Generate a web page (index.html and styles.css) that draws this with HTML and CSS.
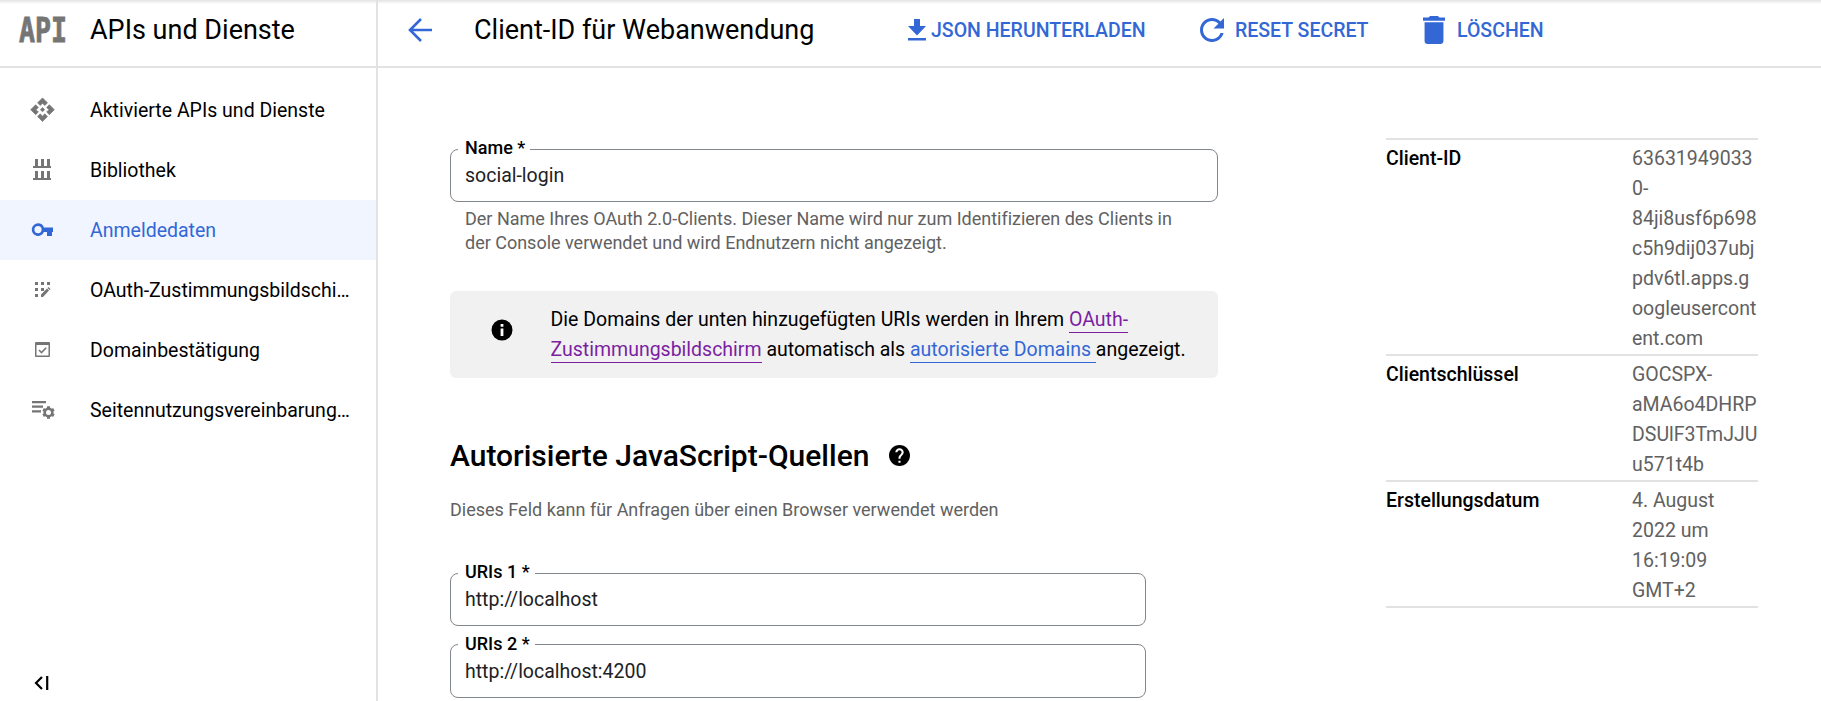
FILE: index.html
```html
<!DOCTYPE html>
<html lang="de">
<head>
<meta charset="utf-8">
<title>Client-ID für Webanwendung</title>
<link rel="stylesheet" href="styles.css">
</head>
<body>
<div class="app">
  <aside class="sidebar">
    <header class="side-head">
      <svg class="logo" width="52" height="50" viewBox="0 0 52 50"><text x="1" y="36.500" textLength="48" lengthAdjust="spacingAndGlyphs">API</text></svg>
      <span class="side-title">APIs und Dienste</span>
    </header>
    <nav class="nav">
      <a class="item"><svg width="28" height="28" viewBox="0 0 24 24"><path d="M14 12l-2 2-2-2 2-2 2 2zm-2-6l2.120 2.120 2.500-2.500L12 1 7.380 5.620l2.500 2.500L12 6zm-6 6l2.120-2.120-2.500-2.500L1 12l4.620 4.620 2.500-2.500L6 12zm12 0l-2.120 2.120 2.500 2.500L23 12l-4.620-4.620-2.500 2.500L18 12zm-6 6l-2.120-2.120-2.500 2.500L12 23l4.620-4.620-2.500-2.500L12 18z" transform="translate(1.400 .7) scale(.92)" stroke="currentColor" stroke-width=".6"/></svg><span>Aktivierte APIs und Dienste</span></a>
      <a class="item"><svg width="28" height="28" viewBox="0 0 28 28"><path d="M7 3h3v7h3V3h3v7h3V3h3v7h1v2H5v-2h2zM7 15h3v7h3v-7h3v7h3v-7h3v7h1v2H5v-2h2z"/></svg><span>Bibliothek</span></a>
      <a class="item active"><svg width="28" height="28" viewBox="0 0 28 28"><path fill-rule="evenodd" d="M10 7.300a6.300 6.300 0 1 0 5.900 8.700H19v4h5v-4h1v-4.500H15.900A6.300 6.300 0 0 0 10 7.300zM10 10a3.600 3.600 0 1 1 0 7.200A3.600 3.600 0 0 1 10 10z"/></svg><span>Anmeldedaten</span></a>
      <a class="item"><svg width="28" height="28" viewBox="0 0 28 28"><path d="M7 6h3v3H7zM13 6h3v3h-3zM19 6h3v3h-3zM7 12h3v3H7zM13 12h3v3h-3zM7 18h3v3H7zM13 18.500l6-6 2 2-6 6.500h-2zM19.500 12l1-1 2 2-1 1z"/></svg><span>OAuth-Zustimmungsbildschi…</span></a>
      <a class="item"><svg width="28" height="28" viewBox="0 0 28 28"><path fill-rule="evenodd" d="M8 6h13a1 1 0 0 1 1 1v13a1 1 0 0 1-1 1H8a1 1 0 0 1-1-1V7a1 1 0 0 1 1-1zM8.500 9v10.500h12V9z"/><path class="line" d="M11 14l2.500 2.500 4.700-4.700" stroke-width="1.600"/></svg><span>Domainbestätigung</span></a>
      <a class="item"><svg width="28" height="28" viewBox="0 0 28 28"><path d="M4 5h14v2.200H4zM4 9.600h11v2.200H4zM4 14.200h9v2.200H4z"/><circle cx="20.500" cy="16.500" r="6.500" fill="#fff"/><circle class="line" cx="20.500" cy="16.500" r="3.800" stroke-width="2.600"/><path class="line" stroke-width="3" d="M20.500 10.300v2.200M20.500 20.500v2.200M15.130 13.400l1.900 1.100M23.970 18.500l1.900 1.100M15.130 19.600l1.900-1.100M23.970 14.500l1.900-1.100"/></svg><span>Seitennutzungsvereinbarung…</span></a>
    </nav>
    <div class="collapse"><svg width="16" height="16" viewBox="0 0 16 16"><path class="line" stroke-width="2.200" d="M8 2L2 8l6 6M13.200 1v14"/></svg></div>
  </aside>
  <main class="main">
    <header class="toolbar">
      <svg class="back" width="26" height="26" viewBox="0 0 26 26"><path class="line" stroke-width="2.600" d="M14 2L3 13 14 24M3 13h22"/></svg>
      <h1 class="title">Client-ID für Webanwendung</h1>
      <a class="action download"><svg width="18" height="22" viewBox="0 0 18 22"><path d="M6 0h6v7h6l-9 9.500L0 7h6zM0 19h18v2.500H0z"/></svg><span>JSON HERUNTERLADEN</span></a>
      <a class="action reset"><svg width="24" height="24" viewBox="4 4 16 16"><path d="M17.650 6.350C16.200 4.900 14.210 4 12 4c-4.420 0-7.990 3.580-7.990 8s3.570 8 7.990 8c3.730 0 6.840-2.550 7.730-6h-2.080c-.82 2.330-3.040 4-5.650 4-3.310 0-6-2.690-6-6s2.690-6 6-6c1.660 0 3.140.69 4.220 1.780L13 11h7V4l-2.350 2.350z"/></svg><span>RESET SECRET</span></a>
      <a class="action delete"><svg width="22" height="28" viewBox="5 3 14 18" preserveAspectRatio="none"><path d="M6 19c0 1.100.9 2 2 2h8c1.100 0 2-.9 2-2V7H6v12zM19 4h-3.500l-1-1h-5l-1 1H5v2h14V4z"/></svg><span>LÖSCHEN</span></a>
    </header>
    <div class="content">
      <section class="form">
        <fieldset class="field"><legend>Name *</legend><span>social-login</span></fieldset>
        <p class="help">Der Name Ihres OAuth 2.0-Clients. Dieser Name wird nur zum Identifizieren des Clients in<br>der Console verwendet und wird Endnutzern nicht angezeigt.</p>
        <div class="info">
          <svg width="22" height="22" viewBox="0 0 22 22"><circle cx="11" cy="11" r="10.500"/><path d="M9.600 5h2.800v2.800H9.600zM9.600 9.500h2.800v7.500H9.600z" fill="#fff"/></svg>
          <p>Die Domains der unten hinzugefügten URIs werden in Ihrem <a class="visited">OAuth-</a><br><a class="visited">Zustimmungsbildschirm</a> automatisch als <a class="link">autorisierte Domains </a>angezeigt.</p>
        </div>
        <h2 class="section">Autorisierte JavaScript-Quellen
          <svg width="21" height="21" viewBox="2 2 20 20"><path d="M12 2C6.480 2 2 6.480 2 12s4.480 10 10 10 10-4.480 10-10S17.520 2 12 2zm1 17h-2v-2h2v2zm2.070-7.750l-.9.920C13.450 12.900 13 13.500 13 15h-2v-.5c0-1.100.45-2.100 1.170-2.830l1.240-1.260c.37-.36.590-.86.590-1.410 0-1.100-.9-2-2-2s-2 .9-2 2H8c0-2.210 1.790-4 4-4s4 1.790 4 4c0 .88-.36 1.680-.93 2.250z"/></svg></h2>
        <p class="desc">Dieses Feld kann für Anfragen über einen Browser verwendet werden</p>
        <fieldset class="field uri"><legend>URIs 1 *</legend><span>http://localhost</span></fieldset>
        <fieldset class="field uri second"><legend>URIs 2 *</legend><span>http://localhost:4200</span></fieldset>
      </section>
      <dl class="details">
        <div class="row"><dt>Client-ID</dt><dd>63631949033<br>0-<br>84ji8usf6p698<br>c5h9dij037ubj<br>pdv6tl.apps.g<br>oogleusercont<br>ent.com</dd></div>
        <div class="row"><dt>Clientschlüssel</dt><dd>GOCSPX-<br>aMA6o4DHRP<br>DSUlF3TmJJU<br>u571t4b</dd></div>
        <div class="row"><dt>Erstellungsdatum</dt><dd>4. August<br>2022 um<br>16:19:09<br>GMT+2</dd></div>
      </dl>
    </div>
  </main>
</div>
</body>
</html>
```
FILE: styles.css
```css
* { box-sizing: border-box; }
body { margin: 0; background: #fff; color: #000; font-family: Roboto, "Liberation Sans", sans-serif; font-size: 19.5px; overflow: hidden; }
p, h1, h2, dl, dd { margin: 0; }
svg { display: block; flex: none; fill: currentColor; }
.line { fill: none; stroke: currentColor; }
.app { display: grid; grid-template-columns: 378px 1fr; height: 701px; }
.app::before { content: ""; position: absolute; top: 0; left: 0; width: 100%; height: 4px; background: linear-gradient(#e3e3e3, rgba(255, 255, 255, 0)); }

.sidebar { display: flex; flex-direction: column; border-right: 2px solid #e2e2e2; }
.side-head { display: flex; align-items: center; height: 68px; padding: 0 0 6px 18px; border-bottom: 2px solid #e2e2e2; }
.logo { overflow: visible; color: #757575; font: bold 33px "DejaVu Sans Mono", monospace; margin-right: 20px; stroke: currentColor; stroke-width: .8px; }
.side-title { font-size: 27px; line-height: 36px; }
.nav { padding-top: 12px; }
.item { display: flex; align-items: center; height: 60px; padding-left: 28px; white-space: nowrap; }
.item svg { color: #757575; margin-right: 34px; }
.active { background: #f0f5ff; color: #3367d6; }
.active svg { color: #3367d6; }
.collapse { margin: auto 0 10px 34px; }

.toolbar { display: flex; align-items: center; height: 68px; padding: 0 0 6px 29px; border-bottom: 2px solid #e2e2e2; color: #3367d6; white-space: nowrap; }
.title { width: 434px; margin-left: 41px; color: #000; font-size: 27px; font-weight: 400; line-height: 36px; }
.action { display: flex; align-items: center; font-weight: 500; font-size: 19.5px; }
.download { width: 292px; gap: 5px; }
.reset { width: 223px; gap: 11px; }
.delete { gap: 12px; }

.content { display: flex; padding: 69px 63px 0 72px; }
.form { width: 768px; }
.field { width: 768px; height: 65px; min-width: 0; margin: 0; padding: 0 0 0 7px; border: 1px solid #80868b; border-radius: 8px; }
.field legend { padding: 0 5px 2px 7px; font-size: 18px; font-weight: 500; line-height: 22px; height: 24px; }
.field span { display: block; padding: 3px 7px 0; line-height: 24px; color: #202124; }
.help { padding: 5px 0 0 15px; font-size: 18px; line-height: 24px; color: #616161; letter-spacing: -0.01px; white-space: nowrap; }
.info { display: flex; align-items: flex-start; height: 87px; margin-top: 36px; padding: 14px 0 0 41px; border-radius: 6px; background: #f1f1f1; white-space: nowrap; }
.info svg { margin: 14px 37.5px 0 0; }
.info p { line-height: 30px; }
.visited, .link { padding-bottom: 1px; border-bottom: 1px solid; }
.visited { color: #7b1fa2; }
.link { color: #3367d6; }
.section { display: flex; align-items: center; gap: 20px; margin-top: 60px; font-size: 30px; font-weight: 500; line-height: 36px; }
.section svg { margin-top: -2px; }
.desc { margin-top: 24px; font-size: 18px; line-height: 24px; color: #616161; }
.uri { width: 696px; margin-top: 39px; }
.second { height: 66px; margin-top: 6px; }
.second legend { padding-top: 1px; padding-bottom: 1px; }
.second span { padding-top: 4px; }

.details { width: 372px; margin: 1px 0 0 auto; border-top: 2px solid #e2e2e2; line-height: 30px; }
.row { display: flex; padding-top: 4px; border-bottom: 2px solid #e2e2e2; }
.row dt { width: 246px; font-weight: 500; }
.row dd { color: #616161; white-space: nowrap; }
```
